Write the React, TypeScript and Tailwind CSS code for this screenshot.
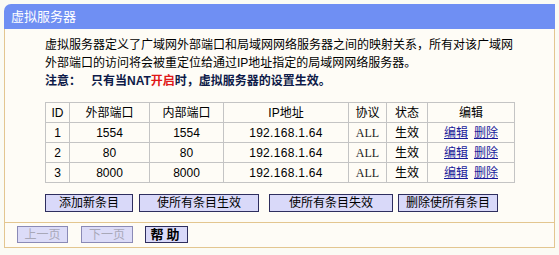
import type { JSX } from 'react';

const FONT = '"Liberation Sans", "Noto Sans CJK SC", sans-serif';

interface Rule {
  id: number;
  ext: string;
  int: string;
  ip: string;
  proto: string;
  status: string;
}

const RULES: Rule[] = [
  { id: 1, ext: '1554', int: '1554', ip: '192.168.1.64', proto: 'ALL', status: '生效' },
  { id: 2, ext: '80', int: '80', ip: '192.168.1.64', proto: 'ALL', status: '生效' },
  { id: 3, ext: '8000', int: '8000', ip: '192.168.1.64', proto: 'ALL', status: '生效' },
];

const cell = 'border border-[#c4c4c4] h-[20px] p-0 text-center font-normal';

export default function App(): JSX.Element {
  return (
    <div
      className="w-[559px] h-[255px] bg-[#fbfbf4] pt-[4px] pl-[4px] text-[12px] text-black"
      style={{ fontFamily: FONT }}
    >
      <div className="w-[551px] flex flex-col">
        {/* Title bar */}
        <div className="h-[25px] bg-[#6f8ff3] rounded-tl-[7px] flex items-center pl-[7px] text-white text-[13px]">
          虚拟服务器
        </div>

        <div className="bg-[#fefcf6] border-l border-r border-b border-[#e3c690]">
          <div className="pl-[40px] pt-[7px] pb-[10px]">
            <div className="leading-[18px]">
              <p>虚拟服务器定义了广域网外部端口和局域网网络服务器之间的映射关系，所有对该广域网</p>
              <p>外部端口的访问将会被重定位给通过IP地址指定的局域网网络服务器。</p>
              <p className="font-bold text-[#0d1a48]">
                注意：<span className="ml-[10px]">只有当NAT</span>
                <span className="text-[#e01818]">开启</span>时，虚拟服务器的设置生效。
              </p>
            </div>

            {/* Rules table */}
            <table className="mt-[12px] border-collapse w-[469px] table-fixed">
              <colgroup>
                <col className="w-[24px]" />
                <col className="w-[80px]" />
                <col className="w-[74px]" />
                <col className="w-[125px]" />
                <col className="w-[38px]" />
                <col className="w-[41px]" />
                <col className="w-[87px]" />
              </colgroup>
              <thead>
                <tr>
                  <th className={cell}>ID</th>
                  <th className={cell}>外部端口</th>
                  <th className={cell}>内部端口</th>
                  <th className={cell}>IP地址</th>
                  <th className={cell}>协议</th>
                  <th className={cell}>状态</th>
                  <th className={cell}>编辑</th>
                </tr>
              </thead>
              <tbody>
                {RULES.map((r) => (
                  <tr key={r.id}>
                    <td className={cell}>{r.id}</td>
                    <td className={cell}>{r.ext}</td>
                    <td className={cell}>{r.int}</td>
                    <td className={`${cell} tracking-[0.3px]`}>{r.ip}</td>
                    <td className={`${cell} text-[12px] text-[#222]`} style={{ fontFamily: '"Liberation Serif", serif' }}>{r.proto}</td>
                    <td className={cell}>{r.status}</td>
                    <td className={cell}>
                      <span className="text-[#1a1a9a] underline">编辑</span>
                      <span className="text-[#1a1a9a] underline ml-[6px]">删除</span>
                    </td>
                  </tr>
                ))}
              </tbody>
            </table>

            {/* Action buttons */}
            <div className="mt-[11px] flex h-[18px]">
              <button className="w-[88px] h-[18px] bg-[#d9d9f9] border border-[#2e2e5e] leading-none">添加新条目</button>
              <button className="ml-[6px] w-[120px] h-[18px] bg-[#d9d9f9] border border-[#2e2e5e] leading-none">使所有条目生效</button>
              <button className="ml-[10px] w-[124px] h-[18px] bg-[#d9d9f9] border border-[#2e2e5e] leading-none">使所有条目失效</button>
              <button className="ml-[5px] w-[100px] h-[18px] bg-[#d9d9f9] border border-[#2e2e5e] leading-none">删除使所有条目</button>
            </div>
          </div>

          {/* Footer */}
          <div className="border-t border-[#e3c690] pl-[12px] pt-[3px] pb-[4px] flex">
            <button className="w-[51px] h-[17px] bg-[#dcdcf8] border border-[#8a8ab6] text-[#a8a8b8] leading-none">上一页</button>
            <button className="ml-[13px] w-[52px] h-[17px] bg-[#dcdcf8] border border-[#8a8ab6] text-[#a8a8b8] leading-none">下一页</button>
            <button className="ml-[12px] w-[43px] h-[17px] bg-[#d9d9f9] border border-[#2e2e5e] font-bold leading-none text-[13px] tracking-[3px]">帮助</button>
          </div>
        </div>
      </div>
    </div>
  );
}
